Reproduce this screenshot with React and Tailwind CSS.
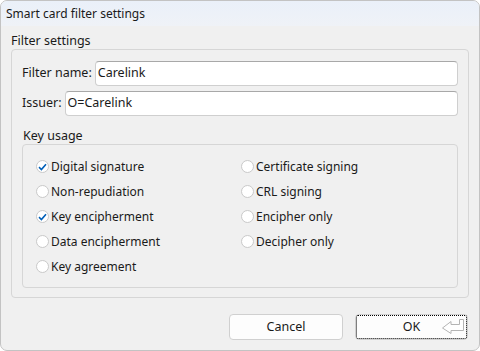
import React from "react";

const font = { fontFamily: '"Noto Sans", "Open Sans", sans-serif' };

function Check({ checked, label }) {
  return (
    <div className="flex h-[25px] items-center">
      <span className="flex h-[13px] w-[13px] items-center justify-center rounded-full border border-[#c9c9c9] bg-white">
        {checked && (
          <svg width="9" height="8" viewBox="0 0 9 8">
            <path d="M1 4.2 L3.4 6.5 L8 1.2" fill="none" stroke="#005fb8" strokeWidth="1.6" />
          </svg>
        )}
      </span>
      <span className="ml-[2px] text-[12px] text-[#1a1a1a]">{label}</span>
    </div>
  );
}

export default function App() {
  return (
    <div
      style={font}
      className="flex h-[351px] w-[480px] flex-col overflow-hidden rounded-[7px] border border-[#c3c3c3] bg-[#f0f0f0] text-[12px] text-[#1a1a1a]"
    >
      <div className="flex h-[25px] items-center bg-gradient-to-b from-[#eaf0f9] to-[#eff2f7] pl-[5px] text-[12px] leading-[16px]">
        Smart card filter settings
      </div>
      <div className="px-[10px]">
        <div className="h-[23px] pt-[7px] text-[12.5px] leading-[16px]">Filter settings</div>
        <div className="flex h-[249px] flex-col rounded-[4px] border border-[#d6d6d6] px-[10px] pt-[11px]">
          <div className="flex h-[25px] items-center">
            <span className="mr-[3px] text-[12.5px]">Filter name:</span>
            <div className="flex h-[25px] flex-1 items-center rounded-[4px] border border-[#cfcfcf] border-t-[#a8a8a8] bg-white px-[2px] text-[12.5px]">
              Carelink
            </div>
          </div>
          <div className="mt-[5px] flex h-[25px] items-center">
            <span className="mr-[3px] text-[12.5px]">Issuer:</span>
            <div className="flex h-[25px] flex-1 items-center rounded-[4px] border border-[#cfcfcf] border-t-[#a8a8a8] bg-white px-[2px] text-[12.5px]">
              O=Carelink
            </div>
          </div>
          <div className="mt-[12px] h-[16px] pl-[1px] text-[12.5px] leading-[16px]">Key usage</div>
          <div className="flex h-[144px] rounded-[4px] border border-[#d6d6d6] pl-[13px] pt-[9px]">
            <div className="flex w-[205px] flex-col">
              <Check checked label="Digital signature" />
              <Check label="Non-repudiation" />
              <Check checked label="Key encipherment" />
              <Check label="Data encipherment" />
              <Check label="Key agreement" />
            </div>
            <div className="flex flex-col">
              <Check label="Certificate signing" />
              <Check label="CRL signing" />
              <Check label="Encipher only" />
              <Check label="Decipher only" />
            </div>
          </div>
        </div>
      </div>
      <div className="mt-[16px] flex justify-end gap-[12px] pr-[11px]">
        <button className="flex h-[26px] w-[114px] items-center justify-center rounded-[4px] border border-[#d0d0d0] bg-[#fdfdfd] text-[12.5px] text-[#1a1a1a]">
          Cancel
        </button>
        <button className="relative flex h-[26px] w-[113px] items-center justify-center rounded-[4px] border border-[#d0d0d0] bg-[#fdfdfd] text-[12.5px] text-[#1a1a1a]">
          <span className="pointer-events-none absolute inset-0 rounded-[2px] border border-dotted border-black" />
          OK
          <svg className="absolute right-[2px] top-[3px]" width="24" height="17" viewBox="0 0 24 17">
            <path
              d="M1.5 10 L10 3.5 L10 6.5 L18.5 6.5 L18.5 1.5 L22.5 1.5 L22.5 12.5 L10 12.5 L10 15.5 Z"
              fill="#ffffff"
              stroke="#b4b4b4"
              strokeWidth="1"
            />
          </svg>
        </button>
      </div>
    </div>
  );
}
